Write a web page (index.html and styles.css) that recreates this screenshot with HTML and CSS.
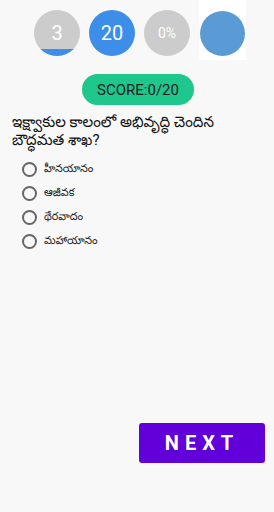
FILE: index.html
```html
<!DOCTYPE html>
<html>
<head>
<meta charset="utf-8">
<link rel="stylesheet" href="styles.css">
</head>
<body>
<div class="page">
  <div class="stats">
    <div class="circle grey"><span>3</span><div class="progress"></div></div>
    <div class="circle blue"><span>20</span></div>
    <div class="circle grey small"><span>0%</span></div>
    <div class="tile"><div class="circle dot"></div></div>
  </div>
  <div class="score-row"><div class="score">SCORE:0/20</div></div>
  <div class="question">ఇక్ష్వాకుల కాలంలో అభివృద్ధి చెందిన బౌద్ధమత శాఖ?</div>
  <ul class="options">
    <li class="option"><span class="radio"></span><span class="label">హీనయానం</span></li>
    <li class="option"><span class="radio"></span><span class="label">ఆజీవక</span></li>
    <li class="option"><span class="radio"></span><span class="label">థేరవాదం</span></li>
    <li class="option"><span class="radio"></span><span class="label">మహాయానం</span></li>
  </ul>
  <div class="spacer"></div>
  <div class="footer"><button class="next">NEXT</button></div>
</div>
</body>
</html>
```
FILE: styles.css
```css
html, body {
  margin: 0;
  padding: 0;
  background: #f8f8f8;
  font-family: Roboto, "Noto Sans", "Noto Sans Telugu", sans-serif;
}
.page {
  width: 274px;
  height: 512px;
  display: flex;
  flex-direction: column;
}
.stats {
  display: flex;
  justify-content: center;
  align-items: flex-start;
  gap: 9px;
  padding-top: 10px;
  padding-left: 6px;
}
.circle {
  width: 46px;
  height: 46px;
  border-radius: 50%;
  position: relative;
  overflow: hidden;
  display: flex;
  align-items: center;
  justify-content: center;
  color: #fff;
  font-size: 20px;
}
.circle span { position: relative; z-index: 1; }
.grey { background: #cccccc; }
.blue { background: #3d8ee9; }
.small { font-size: 14px; }
.progress {
  position: absolute;
  left: 0;
  right: 0;
  bottom: 0;
  height: 7px;
  background: #3d8ee9;
}
.tile {
  background: #ffffff;
  margin-top: -10px;
  padding: 11px 1px 4px 1px;
}
.dot { background: #5b9bd5; width: 45px; height: 45px; }
.score-row {
  display: flex;
  justify-content: center;
  margin-top: 14px;
  padding-left: 2px;
}
.score {
  width: 112px;
  height: 31px;
  border-radius: 16px;
  background: #1fc78d;
  color: #1c1c1c;
  font-size: 15px;
  display: flex;
  align-items: center;
  justify-content: center;
}
.question {
  margin: 8px 12px 0 12px;
  font-size: 15px;
  line-height: 18px;
  color: #111;
}
.options {
  list-style: none;
  margin: 8px 0 0 0;
  padding: 0 0 0 22px;
}
.option {
  display: flex;
  align-items: center;
  height: 24px;
}
.radio {
  width: 11px;
  height: 11px;
  border: 2px solid #666;
  border-radius: 50%;
  margin-right: 7px;
}
.label {
  font-size: 11px;
  color: #222;
}
.spacer { flex: 1; }
.footer {
  display: flex;
  justify-content: flex-end;
  padding: 0 9px 49px 0;
}
.next {
  width: 126px;
  height: 40px;
  border: none;
  border-radius: 3px;
  background: #6200d9;
  color: #fff;
  font-family: Roboto, sans-serif;
  font-weight: bold;
  font-size: 20px;
  letter-spacing: 6px;
  padding: 0 0 0 0;
}
```
